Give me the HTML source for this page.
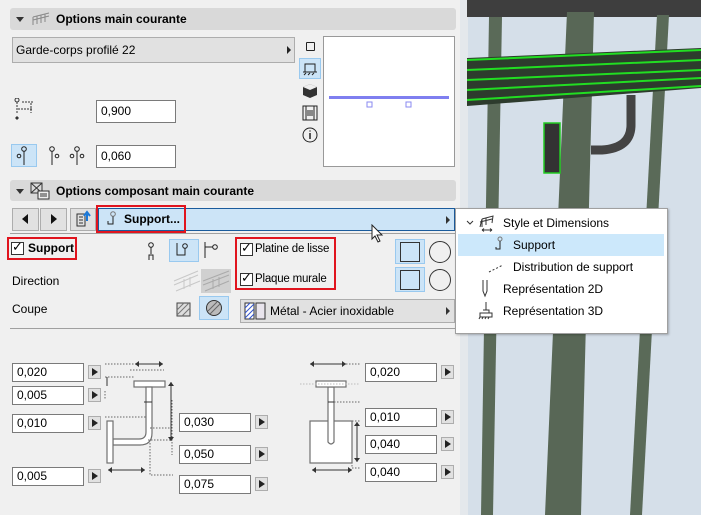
<!DOCTYPE html>
<html><head><meta charset="utf-8"><style>
*{box-sizing:border-box;margin:0;padding:0}
body{width:701px;height:515px;overflow:hidden;background:#f0f0f0;font-family:"Liberation Sans",sans-serif;font-size:12px;color:#000;position:relative}
.a{position:absolute}
.hdr{position:absolute;left:10px;width:446px;background:#d9d9d9;border-radius:3px;font-weight:bold;font-size:12px}
.inp{position:absolute;background:#fff;border:1px solid #7a7a7a;font-size:12px;padding-left:4px;line-height:17px;color:#000}
.btn{position:absolute;width:13px;height:14px;border:1px solid #adadad;background:#e1e1e1}
.btn:after{content:"";position:absolute;left:3px;top:2px;border-left:6px solid #222;border-top:4px solid transparent;border-bottom:4px solid transparent}
.red{position:absolute;border:2px solid #e0141e}
.cb{position:absolute;width:13px;height:13px;border:1px solid #333;background:#fff}
.sel{position:absolute;background:#cce4f7;border:1px solid #99c9ef}
</style></head><body>
<!-- 3D viewport -->
<div class="a" style="left:467px;top:0;width:234px;height:515px;background:#d5dfe9"></div>
<div class="a" style="left:460px;top:0;width:8px;height:515px;background:#e4e8ec"></div>
<svg class="a" style="left:467px;top:0" width="234" height="515">
<rect x="0" y="0" width="234" height="17" fill="#3e3e3e"/>
<path d="M22 17 L35 17 L26 515 L14 515Z" fill="#5a6a58"/>
<path d="M100 12 L127 12 L114 515 L78 515Z" fill="#586756"/>
<path d="M190 15 L202 15 L175 515 L163 515Z" fill="#5a6a58"/>
<path d="M0 58 L234 48 L234 88 L0 106Z" fill="#2d3b2d"/>
<path d="M0 60 L234 50 M0 70 L234 60 M0 80 L234 70 M0 90 L234 78 M0 100 L234 86" stroke="#22dd22" stroke-width="2"/>
<rect x="77" y="123" width="16" height="50" fill="#333" stroke="#22cc22" stroke-width="1.5"/>
<path d="M164 95 L164 125 Q164 148 135 150 L124 150" stroke="#444" stroke-width="9" fill="none"/>
</svg>
<!-- header 1 -->
<div class="hdr" style="top:8px;height:22px"></div>
<div class="a" style="left:16px;top:17px;border-top:5px solid #333;border-left:4px solid transparent;border-right:4px solid transparent"></div>
<svg class="a" style="left:31px;top:11px" width="20" height="16"><path d="M2 6 L18 2 M2 9 L18 5 M2 14 L2 6 M6 13 L6 5 M10 12 L10 4 M14 11 L14 3" stroke="#888" fill="none"/></svg>
<div class="a" style="left:56px;top:12px;font-weight:bold">Options main courante</div>
<div class="a" style="left:12px;top:37px;width:283px;height:26px;background:#e1e1e1;border:1px solid #adadad"></div>
<div class="a" style="left:16px;top:43px">Garde-corps profilé 22</div>
<div class="a" style="left:287px;top:46px;border-left:4px solid #222;border-top:4px solid transparent;border-bottom:4px solid transparent"></div>
<!-- icons column -->
<div class="a" style="left:306px;top:42px;width:9px;height:9px;border:1px solid #222;border-radius:1px"></div>
<div class="sel" style="left:299px;top:58px;width:22px;height:21px"></div>
<svg class="a" style="left:302px;top:61px" width="16" height="16"><path d="M3 11 V3 H13 V11 M1 11 H15 M2 14 L4 12 M6 14 L8 12 M10 14 L12 12" stroke="#222" fill="none"/></svg>
<svg class="a" style="left:302px;top:83px" width="16" height="16"><path d="M8 1 L15 4 L15 12 L8 15 L1 12 L1 4Z" fill="#333"/><path d="M1 4 L8 7 L15 4 L8 1Z" fill="#eee"/></svg>
<svg class="a" style="left:302px;top:105px" width="16" height="16"><path d="M1 1 H15 V15 H1Z M4 1 V15 M12 1 V15 M5 6 H11 M5 8 H11 M5 10 H11" stroke="#222" fill="none"/></svg>
<svg class="a" style="left:302px;top:127px" width="16" height="16"><circle cx="8" cy="8" r="7" stroke="#222" fill="none"/><path d="M8 6 V12 M8 3.5 V4.5" stroke="#222" stroke-width="1.5"/></svg>
<!-- preview -->
<div class="a" style="left:323px;top:36px;width:132px;height:131px;background:#fff;border:1px solid #999"></div>
<svg class="a" style="left:323px;top:36px" width="132" height="131"><rect x="6" y="60" width="120" height="3" fill="#7f7ff0"/><rect x="44" y="66" width="5" height="5" fill="none" stroke="#8a8af0"/><rect x="83" y="66" width="5" height="5" fill="none" stroke="#8a8af0"/></svg>
<svg class="a" style="left:13px;top:98px" width="24" height="24"><circle cx="4" cy="2" r="2" fill="none" stroke="#333"/><path d="M4 4 V16 M5 11 H20 M9 4 H20 M18 5 V15" stroke="#333" stroke-dasharray="2 1" fill="none"/><path d="M4 18 l2 2 -2 2 -2 -2z" fill="#333"/></svg>
<div class="inp" style="left:96px;top:100px;width:80px;height:23px;line-height:21px">0,900</div>
<div class="sel" style="left:11px;top:144px;width:26px;height:23px"></div>
<svg class="a" style="left:14px;top:146px" width="90" height="20"><circle cx="10" cy="3" r="2.3" fill="none" stroke="#222"/><path d="M10 5 V19" stroke="#222"/><circle cx="5" cy="10" r="1.8" fill="none" stroke="#222"/><circle cx="38" cy="3" r="2.3" fill="none" stroke="#222"/><path d="M38 5 V19" stroke="#222"/><circle cx="43" cy="10" r="1.8" fill="none" stroke="#222"/><circle cx="63" cy="3" r="2.3" fill="none" stroke="#222"/><path d="M63 5 V19" stroke="#222"/><circle cx="58" cy="10" r="1.8" fill="none" stroke="#222"/><circle cx="68" cy="10" r="1.8" fill="none" stroke="#222"/></svg>
<div class="inp" style="left:96px;top:145px;width:80px;height:23px;line-height:21px">0,060</div>
<!-- header 2 -->
<div class="hdr" style="top:180px;height:21px"></div>
<div class="a" style="left:16px;top:189px;border-top:5px solid #333;border-left:4px solid transparent;border-right:4px solid transparent"></div>
<svg class="a" style="left:30px;top:182px" width="20" height="18"><rect x="1" y="1" width="11" height="10" fill="none" stroke="#333"/><path d="M1 1 L12 11 M12 1 L1 11" stroke="#333"/><rect x="8" y="9" width="11" height="8" fill="#f0f0f0" stroke="#333"/><path d="M10 12 H17 M10 14 H17" stroke="#333"/></svg>
<div class="a" style="left:56px;top:184px;font-weight:bold">Options composant main courante</div>
<!-- nav row -->
<div class="a" style="left:12px;top:208px;width:27px;height:23px;background:#e1e1e1;border:1px solid #adadad"></div>
<div class="a" style="left:22px;top:214px;border-right:6px solid #111;border-top:5px solid transparent;border-bottom:5px solid transparent"></div>
<div class="a" style="left:40px;top:208px;width:27px;height:23px;background:#e1e1e1;border:1px solid #adadad"></div>
<div class="a" style="left:51px;top:214px;border-left:6px solid #111;border-top:5px solid transparent;border-bottom:5px solid transparent"></div>
<div class="a" style="left:70px;top:208px;width:26px;height:23px;background:#e1e1e1;border:1px solid #adadad"></div>
<svg class="a" style="left:75px;top:210px" width="18" height="18"><path d="M2 4 H10 V16 H2Z M4 7 H8 M4 10 H8 M4 13 H8" stroke="#333" fill="none"/><path d="M12 11 V4 M9 6 L12 2 L15 6" stroke="#1a78d8" stroke-width="2" fill="none"/></svg>
<div class="a" style="left:98px;top:208px;width:357px;height:23px;background:#cce4f7;border:1px solid #1a5b9c"></div>
<svg class="a" style="left:104px;top:211px" width="14" height="18"><circle cx="9" cy="3" r="2.3" fill="none" stroke="#777"/><path d="M9 5.5 V13 H4 V10" stroke="#222" fill="none"/></svg>
<div class="a" style="left:124px;top:212px;font-weight:bold">Support...</div>
<div class="a" style="left:446px;top:216px;border-left:4px solid #333;border-top:4px solid transparent;border-bottom:4px solid transparent"></div>
<div class="red" style="left:96px;top:205px;width:90px;height:28px"></div>
<div class="a" style="left:10px;top:233px;width:445px;height:1px;background:#a0a0a0"></div>
<!-- support row -->
<div class="cb" style="left:11px;top:242px"></div>
<div class="a" style="left:12px;top:239px;font-size:13px">✓</div>
<div class="a" style="left:28px;top:241px;font-weight:bold">Support</div>
<div class="red" style="left:7px;top:237px;width:70px;height:23px"></div>
<svg class="a" style="left:146px;top:242px" width="10" height="20"><circle cx="5" cy="3" r="2.3" fill="none" stroke="#222"/><path d="M5 5.5 V12 M3 18 V13 H7 V18" stroke="#222" fill="none"/></svg>
<div class="sel" style="left:169px;top:239px;width:30px;height:23px"></div>
<svg class="a" style="left:172px;top:241px" width="24" height="20"><circle cx="13" cy="5" r="2.3" fill="none" stroke="#222"/><path d="M13 7.5 V14 H5 V2" stroke="#222" fill="none"/></svg>
<svg class="a" style="left:203px;top:241px" width="16" height="20"><circle cx="12" cy="6" r="2.3" fill="none" stroke="#222"/><path d="M2 1 V17 M2 6 H9.5" stroke="#222" fill="none"/></svg>
<div class="cb" style="left:240px;top:243px"></div><div class="a" style="left:241px;top:240px;font-size:13px">✓</div>
<div class="a" style="left:255px;top:243px;font-size:11.5px;letter-spacing:-0.2px">Platine de lisse</div>
<div class="cb" style="left:240px;top:273px"></div><div class="a" style="left:241px;top:270px;font-size:13px">✓</div>
<div class="a" style="left:255px;top:273px;font-size:11.5px;letter-spacing:-0.2px">Plaque murale</div>
<div class="red" style="left:235px;top:237px;width:101px;height:53px"></div>
<div class="sel" style="left:395px;top:239px;width:30px;height:25px"></div>
<div class="a" style="left:400px;top:242px;width:20px;height:20px;border:1px solid #333;background:#cce4f7"></div>
<div class="a" style="left:429px;top:241px;width:22px;height:22px;border:1px solid #333;border-radius:50%"></div>
<div class="sel" style="left:395px;top:267px;width:30px;height:25px"></div>
<div class="a" style="left:400px;top:270px;width:20px;height:20px;border:1px solid #333;background:#cce4f7"></div>
<div class="a" style="left:429px;top:269px;width:22px;height:22px;border:1px solid #333;border-radius:50%"></div>
<div class="a" style="left:12px;top:274px">Direction</div>
<svg class="a" style="left:172px;top:269px" width="60" height="24"><path d="M2 12 L26 2 M2 16 L26 6 M4 22 L28 12 M12 10 V20 M18 8 V18" stroke="#c8c8c8" fill="none"/><rect x="29" y="0" width="30" height="24" fill="#d0d0d0"/><path d="M31 12 L57 2 M31 16 L57 6 M33 22 L57 12 M41 10 V20 M47 8 V18" stroke="#aaa" fill="none"/></svg>
<div class="a" style="left:12px;top:302px">Coupe</div>
<svg class="a" style="left:176px;top:302px" width="16" height="16"><rect x="1" y="1" width="13" height="13" fill="#ddd" stroke="#444"/><path d="M1 8 L8 1 M1 13 L13 1 M6 14 L14 6" stroke="#777"/></svg>
<div class="sel" style="left:199px;top:296px;width:30px;height:24px"></div>
<svg class="a" style="left:205px;top:299px" width="18" height="18"><circle cx="9" cy="9" r="7.5" fill="#bbb" stroke="#333"/><path d="M3 12 L12 3 M5 15 L15 5" stroke="#666"/></svg>
<div class="a" style="left:240px;top:299px;width:215px;height:24px;background:#e1e1e1;border:1px solid #adadad"></div>
<svg class="a" style="left:244px;top:302px" width="24" height="18"><rect x="1" y="1" width="9" height="16" fill="#fff" stroke="#333"/><path d="M1 6 L6 1 M1 11 L10 2 M1 16 L10 7 M5 17 L10 12" stroke="#3355cc"/><rect x="12" y="1" width="9" height="16" fill="#e8e4ec" stroke="#333"/></svg>
<div class="a" style="left:270px;top:304px">Métal - Acier inoxidable</div>
<div class="a" style="left:446px;top:307px;border-left:4px solid #333;border-top:4px solid transparent;border-bottom:4px solid transparent"></div>
<div class="a" style="left:10px;top:328px;width:445px;height:1px;background:#a0a0a0"></div>
<!-- popup menu -->
<div class="a" style="left:455px;top:208px;width:213px;height:126px;background:#fff;border:1px solid #a0a0a0;box-shadow:1px 1px 2px rgba(0,0,0,.25)"></div>
<div class="a" style="left:458px;top:234px;width:206px;height:22px;background:#cce8fb"></div>
<svg class="a" style="left:465px;top:214px" width="40" height="110">
<path d="M2 7 L5 10 L8 7" stroke="#333" fill="none"/>
<path d="M17 5 L28 2 L27 9 M15 13 L17 5 V13 M21 4 V11 M15 8 L27 5 M17 16 H27 M17 16 l2 -1.5 M17 16 l2 1.5 M27 16 l-2 -1.5 M27 16 l-2 1.5" stroke="#333" fill="none"/>
<circle cx="35" cy="25" r="2" fill="none" stroke="#777"/><path d="M35 27 V35 H31 V33" stroke="#222" fill="none"/>
<path d="M24 58 L38 51" stroke="#333" stroke-dasharray="2 2"/>
<path d="M18 66 V77 L20 82 L22 77 V66" stroke="#333" fill="none"/>
<path d="M21 88 V96 M18 96 H24 V99 M15 99 H27 V103 H15Z M15 103 L14 105 M18 103 L17 105 M21 103 L20 105 M24 103 L23 105" stroke="#333" fill="none"/>
</svg>
<div class="a" style="left:503px;top:216px">Style et Dimensions</div>
<div class="a" style="left:513px;top:238px">Support</div>
<div class="a" style="left:513px;top:260px">Distribution de support</div>
<div class="a" style="left:503px;top:282px">Représentation 2D</div>
<div class="a" style="left:503px;top:304px">Représentation 3D</div>
<svg class="a" style="left:371px;top:224px" width="16" height="20"><path d="M1 1 V15 L4 12 L7 18 L9 17 L6 11 L11 11Z" fill="#fff" stroke="#222"/></svg>
<!-- dimension fields -->
<div class="inp" style="left:12px;top:363px;width:72px;height:19px">0,020</div><div class="btn" style="left:88px;top:365px"></div>
<div class="inp" style="left:12px;top:386px;width:72px;height:19px">0,005</div><div class="btn" style="left:88px;top:388px"></div>
<div class="inp" style="left:12px;top:414px;width:72px;height:19px">0,010</div><div class="btn" style="left:88px;top:416px"></div>
<div class="inp" style="left:12px;top:467px;width:72px;height:19px">0,005</div><div class="btn" style="left:88px;top:469px"></div>
<div class="inp" style="left:179px;top:413px;width:72px;height:19px">0,030</div><div class="btn" style="left:255px;top:415px"></div>
<div class="inp" style="left:179px;top:445px;width:72px;height:19px">0,050</div><div class="btn" style="left:255px;top:447px"></div>
<div class="inp" style="left:179px;top:475px;width:72px;height:19px">0,075</div><div class="btn" style="left:255px;top:477px"></div>
<div class="inp" style="left:365px;top:363px;width:72px;height:19px">0,020</div><div class="btn" style="left:441px;top:365px"></div>
<div class="inp" style="left:365px;top:408px;width:72px;height:19px">0,010</div><div class="btn" style="left:441px;top:410px"></div>
<div class="inp" style="left:365px;top:435px;width:72px;height:19px">0,040</div><div class="btn" style="left:441px;top:437px"></div>
<div class="inp" style="left:365px;top:463px;width:72px;height:19px">0,040</div><div class="btn" style="left:441px;top:465px"></div>
<svg class="a" style="left:0;top:340px" width="460" height="175">
<g fill="#fff" stroke="#707070" stroke-width="1.2">
<rect x="134" y="41" width="31" height="6"/>
<path d="M146 47 V92 Q146 99 139 99 H113 V105 H140 Q152 105 152 93 V47Z"/>
<rect x="107" y="81" width="6" height="42"/>
<rect x="310" y="81" width="42" height="42"/>
<path d="M328 47 V102 Q331 106 334 102 V47Z"/>
<rect x="316" y="41" width="30" height="6"/>
</g>
<g stroke="#666" stroke-dasharray="1.5 1.5" fill="none">
<path d="M105 24 H135 M105 37 H134 M105 51 V60 M105 77 H146 M150 88 H174 M148 100 H172 M150 103 V135 H173 M172 60 V115"/>
<path d="M346 24 H360 M352 81 H360 M352 122 V128 H360 M334 62 H360"/>
<path d="M130 30 H164" /><path d="M300 44 H360" stroke="#bbb"/>
</g>
<g stroke="#333" fill="none">
<path d="M135 24 H163 M107 37 V46 M171 42 V101 M144 62 H152 M108 130 H145 M310 24 H346 M328 62 H334 M357 82 V122 M312 130 H352"/>
</g>
<g fill="#333">
<path d="M135 24 l4 -3 v6z M163 24 l-4 -3 v6z M171 42 l-3 4 h6z M171 101 l-3 -4 h6z M108 130 l4 -3 v6z M145 130 l-4 -3 v6z M310 24 l4 -3 v6z M346 24 l-4 -3 v6z M357 82 l-3 4 h6z M357 122 l-3 -4 h6z M312 130 l4 -3 v6z M352 130 l-4 -3 v6z"/>
</g>
</svg>
</body></html>
